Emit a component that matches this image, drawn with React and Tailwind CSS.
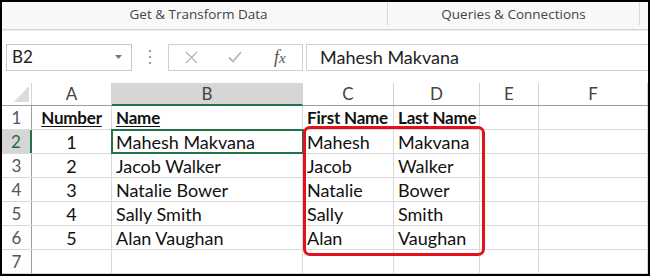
const cols = [
  { key: 'A', w: 'w-[80px]' },
  { key: 'B', w: 'w-[191px]' },
  { key: 'C', w: 'w-[91px]' },
  { key: 'D', w: 'w-[86px]' },
  { key: 'E', w: 'w-[59px]' },
  { key: 'F', w: 'flex-1' },
];

const rows = [
  ['Number', 'Name', 'First Name', 'Last Name', '', ''],
  ['1', 'Mahesh Makvana', 'Mahesh', 'Makvana', '', ''],
  ['2', 'Jacob Walker', 'Jacob', 'Walker', '', ''],
  ['3', 'Natalie Bower', 'Natalie', 'Bower', '', ''],
  ['4', 'Sally Smith', 'Sally', 'Smith', '', ''],
  ['5', 'Alan Vaughan', 'Alan', 'Vaughan', '', ''],
  ['', '', '', '', '', ''],
];

function Ribbon() {
  return (
    <div className="flex h-[28px] bg-[#f8f8f8] border-b border-[#d6d6d6] font-['Open_Sans',sans-serif] text-[13.5px] text-[#444]">
      <div className="w-[386px] flex items-end justify-center pb-[1px] pl-[8px] border-r border-[#d9d9d9] mb-[4px]">
        Get &amp; Transform Data
      </div>
      <div className="w-[252px] flex items-end justify-center pb-[1px] border-r border-[#d9d9d9] mb-[4px]">
        Queries &amp; Connections
      </div>
      <div className="flex-1" />
    </div>
  );
}

function FormulaBar() {
  return (
    <div className="h-[53px] bg-white flex items-center pl-[4px] border-t border-[#ececec]">
      <div className="w-[126px] h-[27px] border border-[#c8c8c8] flex items-center justify-between pl-[5px] pr-[9px]">
        <span className="font-['Lato',sans-serif] text-[17px] text-[#222]">B2</span>
        <svg width="7" height="4" viewBox="0 0 7 4"><path d="M0 0h7L3.5 4z" fill="#777" /></svg>
      </div>
      <div className="w-[36px] flex flex-col items-center gap-[4px]">
        <span className="w-[2px] h-[2px] bg-[#999]" />
        <span className="w-[2px] h-[2px] bg-[#999]" />
        <span className="w-[2px] h-[2px] bg-[#999]" />
      </div>
      <div className="w-[135px] h-[27px] border border-[#d0d0d0] flex items-center">
        <div className="w-[45px] flex justify-center">
          <svg width="13" height="13" viewBox="0 0 13 13"><path d="M1 1l11 11M12 1L1 12" stroke="#b3b3b3" strokeWidth="1.3" /></svg>
        </div>
        <div className="w-[45px] flex justify-center">
          <svg width="14" height="12" viewBox="0 0 14 12"><path d="M1 6.5l4 4L13 1" stroke="#b8b8b8" strokeWidth="1.8" fill="none" /></svg>
        </div>
        <div className="w-[45px] flex justify-center font-['Liberation_Serif',serif] italic text-[18px] text-[#555] leading-none">
          <span>f</span><span className="text-[15px] mt-[3px]">x</span>
        </div>
      </div>
      <div className="flex-1 h-[27px] ml-[3px] border border-r-0 border-[#d0d0d0] flex items-center pl-[13px] font-['Lato',sans-serif] text-[18px] text-[#222]">
        Mahesh Makvana
      </div>
    </div>
  );
}

function Grid() {
  return (
    <div className="relative font-['Lato',sans-serif] text-[18px] text-[#111]">
      <div className="flex h-[23px] border-b border-[#9e9e9e]">
        <div className="w-[30px] relative border-r border-[#d4d4d4]">
          <svg className="absolute right-[2px] bottom-[3px]" width="15" height="16" viewBox="0 0 15 16"><path d="M15 0v16H0z" fill="#dcdcdc" /></svg>
        </div>
        {cols.map((c) => (
          <div
            key={c.key}
            className={`${c.w} flex items-center justify-center text-[17px] text-[#444] border-r border-[#d4d4d4] ${c.key === 'B' ? 'bg-[#d6d6d6] text-[#1e6c41] border-b-2 border-b-[#217346] -mb-[1px]' : ''}`}
          >
            {c.key}
          </div>
        ))}
      </div>
      {rows.map((r, i) => (
        <div key={i} className="flex h-[24px] border-b border-[#d9d9d9]">
          <div
            className={`w-[30px] flex items-center justify-center text-[17px] border-r ${i === 1 ? 'bg-[#d6d6d6] text-[#1e6c41] border-r-2 border-r-[#217346]' : 'text-[#555] border-[#9e9e9e]'}`}
          >
            {i + 1}
          </div>
          {cols.map((c, j) => (
            <div
              key={c.key}
              className={`${c.w} flex items-center border-r border-[#d9d9d9] whitespace-nowrap pt-[1px] ${j === 0 ? 'justify-center' : 'pl-[4px]'} ${i === 0 ? 'font-bold text-[17px] tracking-[-0.2px]' : ''} ${i === 0 && j < 2 ? 'underline underline-offset-2' : ''} ${i === 1 && j === 1 ? 'outline-2 outline-[#217346] -outline-offset-1' : ''}`}
            >
              {r[j]}
            </div>
          ))}
        </div>
      ))}
      <div className="absolute left-[301px] top-[43px] w-[182px] h-[130px] border-[3px] border-[#e3101d] rounded-[7px]" />
    </div>
  );
}

export default function App() {
  return (
    <div className="w-[650px] h-[276px] border-2 border-black bg-white overflow-hidden">
      <Ribbon />
      <FormulaBar />
      <Grid />
    </div>
  );
}
